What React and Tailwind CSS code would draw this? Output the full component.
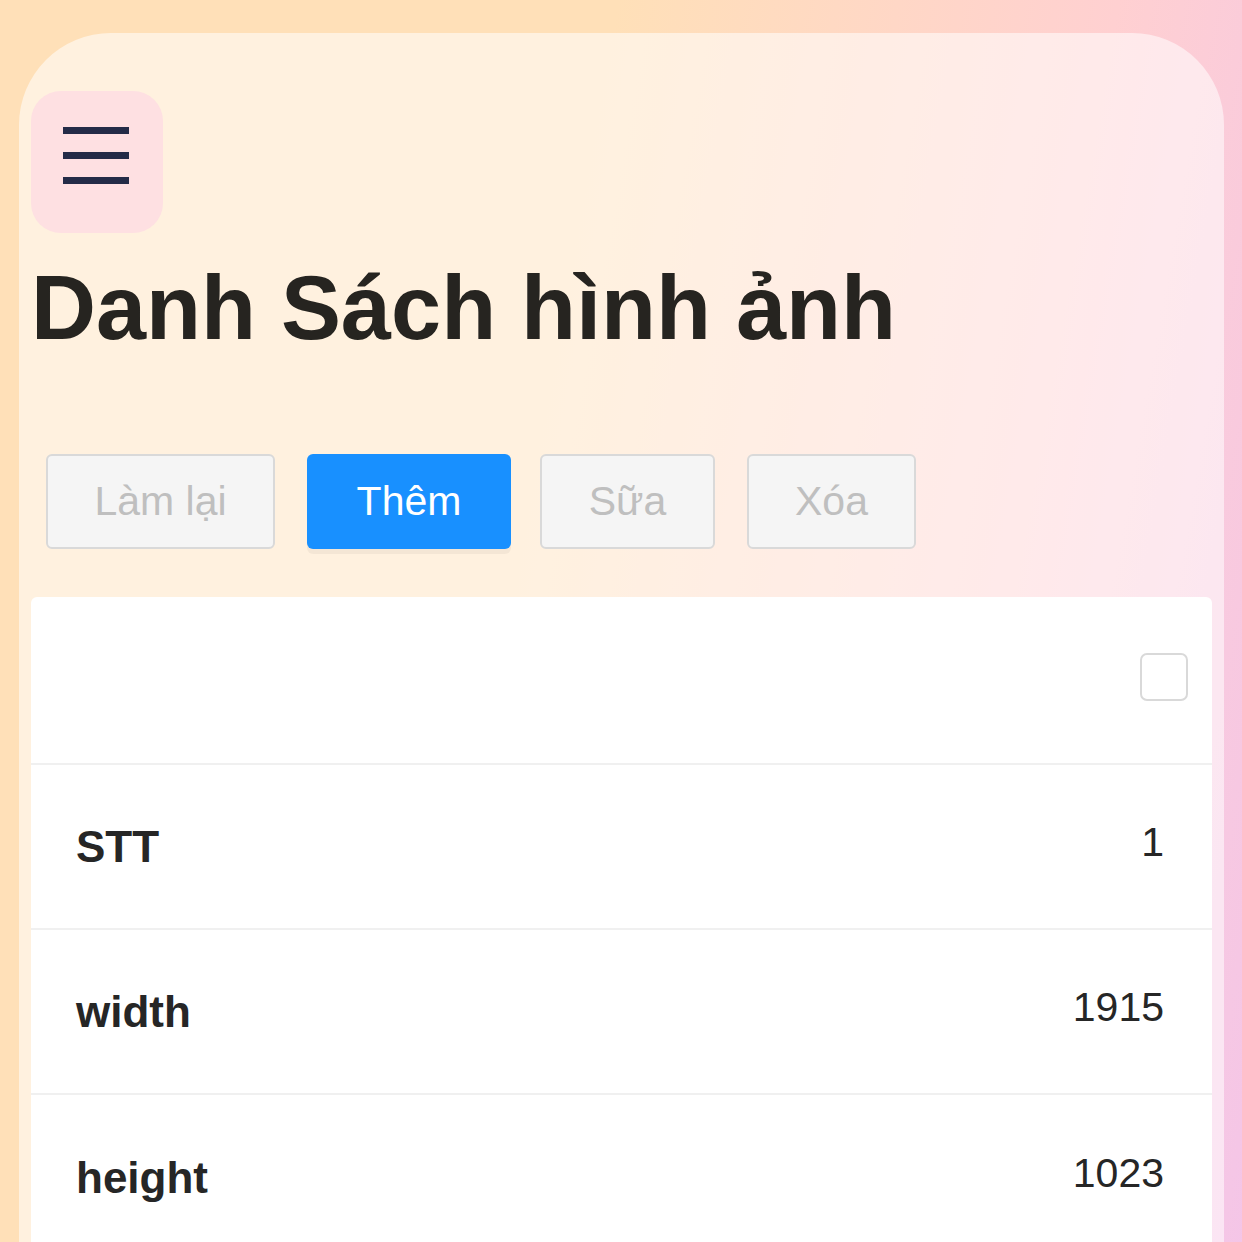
import React from "react";

function Row({ label, value, last }) {
  return (
    <div className={`flex items-center justify-between h-[165px] pl-[45px] pr-[48px] ${last ? "" : "border-b-2 border-[#f0f0f0]"}`}>
      <span className="text-[44px] font-bold text-[#262626] leading-none">{label}</span>
      <span className="text-[41px] text-[#262626] leading-none -translate-y-[4px]">{value}</span>
    </div>
  );
}

export default function App() {
  return (
    <div
      className="min-h-[1300px] w-full pt-[33px] pl-[19px] pr-[18px] bg-[linear-gradient(100deg,#ffe0b8_42%,#ffd0d1_76%,#f4c5e8_100%)]"
      style={{ fontFamily: '"Liberation Sans", Arial, sans-serif' }}
    >
      <div className="rounded-t-[92px] bg-white/55 min-h-[1260px] px-[12px] pt-[58px]">
        <div className="flex items-start w-[132px] h-[142px] rounded-[30px] bg-[#fee0e2] pt-[36px] pl-[32px]">
          <svg width="66" height="58" viewBox="0 0 66 58" className="block">
            <rect x="0" y="0" width="66" height="7" fill="#242b47" />
            <rect x="0" y="25" width="66" height="7" fill="#242b47" />
            <rect x="0" y="50" width="66" height="7" fill="#242b47" />
          </svg>
        </div>

        <h1 className="mt-[30px] text-[90px] leading-none font-bold text-[#262420] whitespace-nowrap">
          Danh Sách hình ảnh
        </h1>

        <div className="mt-[101px] ml-[15px] flex items-center">
          <button className="w-[229px] h-[95px] rounded-[6px] border-2 border-[#d9d9d9] bg-[#f5f5f5] text-[41px] text-[#bfbfbf] leading-none">
            Làm lại
          </button>
          <button className="ml-[32px] w-[204px] h-[95px] rounded-[6px] bg-[#1890ff] text-[41px] text-white leading-none shadow-[0_5px_0_rgba(0,0,0,0.045)]">
            Thêm
          </button>
          <button className="ml-[29px] w-[175px] h-[95px] rounded-[6px] border-2 border-[#d9d9d9] bg-[#f5f5f5] text-[41px] text-[#bfbfbf] leading-none">
            Sữa
          </button>
          <button className="ml-[32px] w-[169px] h-[95px] rounded-[6px] border-2 border-[#d9d9d9] bg-[#f5f5f5] text-[41px] text-[#bfbfbf] leading-none">
            Xóa
          </button>
        </div>

        <div className="mt-[48px] bg-white rounded-t-[6px]">
          <div className="flex items-center justify-end h-[168px] pr-[24px] border-b-2 border-[#f0f0f0]">
            <span className="block w-[48px] h-[48px] rounded-[7px] border-2 border-[#d9d9d9] bg-white -translate-y-[3px]" />
          </div>
          <Row label="STT" value="1" />
          <Row label="width" value="1915" />
          <Row label="height" value="1023" last />
        </div>
      </div>
    </div>
  );
}
